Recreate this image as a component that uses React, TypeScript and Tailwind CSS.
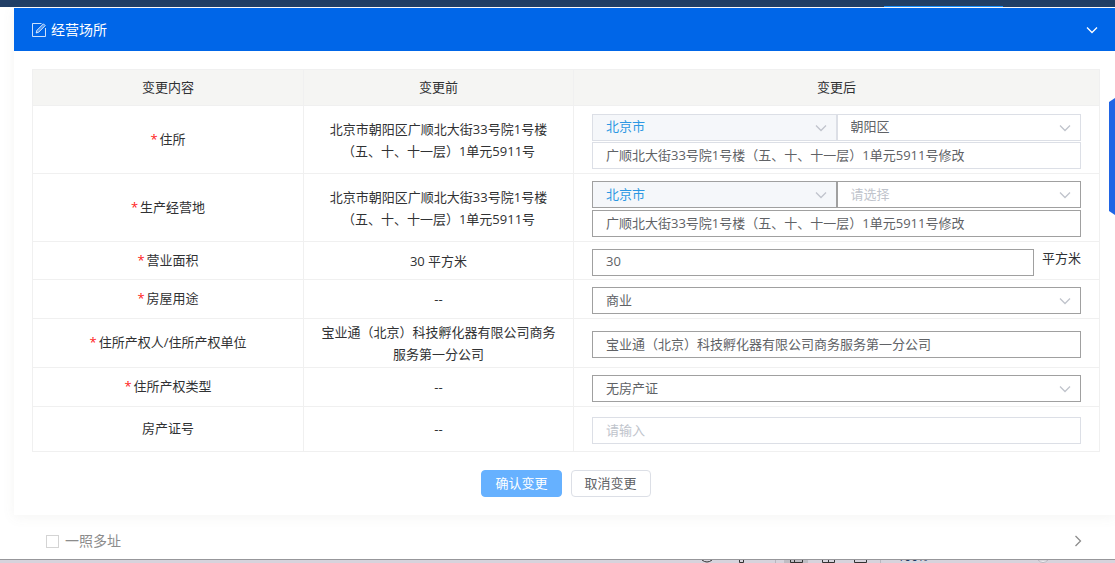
import React, { useState } from 'react';

interface FieldProps {
  label: string;
  muted?: boolean;
}

interface TextFieldProps extends FieldProps {
  value: string;
  placeholder?: string;
}

interface SelectFieldProps extends FieldProps {
  options: string[];
  placeholder?: string;
  active?: boolean;
}

interface RowProps {
  title: string;
  required?: boolean;
  before: string;
  height: string;
  children: React.ReactNode;
}

const fieldClass = 'block w-full h-[27px] border px-[13px] pb-0.5 text-[13px] leading-[20px] outline-none';

const Chevron: React.FC<{ className?: string }> = ({ className }) => (
  <svg viewBox="0 0 12 12" className={`size-3 ${className ?? ''}`} fill="none" stroke="currentColor" strokeWidth="1.3" aria-hidden="true">
    <path d="M1 3.500 6 8.500 11 3.500" />
  </svg>
);

const EditIcon = () => (
  <svg viewBox="0 0 14 14" className="size-3.5" fill="none" stroke="currentColor" strokeOpacity="0.8" aria-hidden="true">
    <path d="M9.500 .5H.5v13h13V5" />
    <path d="M4.200 10 4.900 7.300 11.400 .8 13.200 2.600 6.700 9.200Z" fill="currentColor" fillOpacity="0.3" />
  </svg>
);

const TextField: React.FC<TextFieldProps> = ({ label, value, placeholder, muted }) => {
  const [text, setText] = useState(value);
  return (
    <input
      type="text"
      aria-label={label}
      value={text}
      placeholder={placeholder}
      onChange={(e) => setText(e.target.value)}
      className={`${fieldClass} bg-white text-[#606266] placeholder:text-[#c0c4cc] ${muted ? 'border-[#dcdfe6]' : 'border-[#a0a0a0]'}`}
    />
  );
};

const SelectField: React.FC<SelectFieldProps> = ({ label, options, placeholder, muted, active }) => {
  const [selected, setSelected] = useState(placeholder ? '' : options[0]);
  const color = active ? 'bg-[#f5f7fa] text-[#2c97e3]' : selected ? 'bg-white text-[#606266]' : 'bg-white text-[#c0c4cc]';
  return (
    <div className="relative flex-1">
      <select
        aria-label={label}
        value={selected}
        onChange={(e) => setSelected(e.target.value)}
        className={`${fieldClass} appearance-none ${color} ${muted ? 'border-[#dcdfe6]' : 'border-[#a0a0a0]'}`}
      >
        {placeholder && <option value="">{placeholder}</option>}
        {options.map((option) => (
          <option key={option}>{option}</option>
        ))}
      </select>
      <Chevron className="pointer-events-none absolute right-2.5 top-2 text-[#c0c4cc]" />
    </div>
  );
};

const Row: React.FC<RowProps> = ({ title, required = true, before, height, children }) => (
  <tr className={height}>
    <th scope="row" className="border border-[#f0f0f0] pb-0.5 font-normal">
      {required && <span className="mr-0.5 text-[#ff2020]">*</span>}
      {title}
    </th>
    <td className="border border-[#f0f0f0] px-4 text-center">{before}</td>
    <td className="border border-[#f0f0f0] px-[18px] pt-[3px]">{children}</td>
  </tr>
);

const address = '北京市朝阳区广顺北大街33号院1号楼（五、十、十一层）1单元5911号';
const addressDetail = '广顺北大街33号院1号楼（五、十、十一层）1单元5911号修改';
const company = '宝业通（北京）科技孵化器有限公司商务服务第一分公司';

export default function App() {
  const [multiSite, setMultiSite] = useState(false);

  return (
    <div className="relative flex min-h-screen flex-col overflow-hidden bg-white font-['Open_Sans','Noto_Sans_CJK_SC',sans-serif] text-[13px] leading-[22px] text-[#303133]">
      <div className="flex h-[7px] items-end justify-end bg-[#213f66] pr-28">
        <div className="h-px w-[119px] bg-[#1890ff]" />
      </div>

      <main className="mt-px flex-1">
        <section className="ml-3.5 pb-[18px] shadow-[0_2px_12px_rgba(120,120,100,0.08)]">
          <header className="flex h-[43px] items-center bg-[#0066e8] pl-[18px] pr-[17px] text-white">
            <EditIcon />
            <h2 className="ml-[5px] flex-1 text-sm font-normal">经营场所</h2>
            <button type="button" aria-label="收起">
              <Chevron className="block" />
            </button>
          </header>

          <div className="pl-[18px] pr-[15px] pt-[18px]">
            <table className="w-full table-fixed border-collapse">
              <thead>
                <tr className="h-9 bg-[#f5f5f3]">
                  <th className="w-[271px] border border-[#f0f0f0] pb-0.5 font-normal">变更内容</th>
                  <th className="w-[270px] border border-[#f0f0f0] pb-0.5 font-normal">变更前</th>
                  <th className="border border-[#f0f0f0] pb-0.5 font-normal">变更后</th>
                </tr>
              </thead>
              <tbody>
                <Row title="住所" before={address} height="h-[68px]">
                  <div className="mb-px flex">
                    <SelectField label="住所城市" options={['北京市']} muted active />
                    <SelectField label="住所区县" options={['朝阳区']} muted />
                  </div>
                  <TextField label="住所详细地址" value={addressDetail} muted />
                </Row>
                <Row title="生产经营地" before={address} height="h-[68px]">
                  <div className="mb-0.5 flex">
                    <SelectField label="生产经营地城市" options={['北京市']} active />
                    <SelectField label="生产经营地区县" options={['朝阳区']} placeholder="请选择" />
                  </div>
                  <TextField label="生产经营地详细地址" value={addressDetail} />
                </Row>
                <Row title="营业面积" before="30 平方米" height="h-[38px]">
                  <div className="flex items-start gap-2">
                    <TextField label="营业面积" value="30" />
                    <span className="shrink-0 leading-[18px]">平方米</span>
                  </div>
                </Row>
                <Row title="房屋用途" before="--" height="h-[39px]">
                  <SelectField label="房屋用途" options={['商业']} />
                </Row>
                <Row title="住所产权人/住所产权单位" before={company} height="h-[49px]">
                  <TextField label="住所产权人/住所产权单位" value={company} />
                </Row>
                <Row title="住所产权类型" before="--" height="h-[39px]">
                  <SelectField label="住所产权类型" options={['无房产证']} />
                </Row>
                <Row title="房产证号" required={false} before="--" height="h-[45px]">
                  <TextField label="房产证号" value="" placeholder="请输入" muted />
                </Row>
              </tbody>
            </table>
          </div>

          <div className="mt-[18px] flex justify-center gap-[9px] pr-[15px] pl-[18px]">
            <button type="button" className="h-[27px] rounded border border-[#66b1ff] bg-[#66b1ff] px-[13px] pb-0.5 leading-[20px] text-white">
              确认变更
            </button>
            <button type="button" className="h-[27px] rounded border border-[#dcdfe6] bg-white px-[13px] pb-0.5 leading-[20px] text-[#606266]">
              取消变更
            </button>
          </div>
        </section>

        <section className="flex items-center pt-4 pr-[31px] pl-[46px] pb-1.5 text-sm text-[#8c8c8c]">
          <label className="flex flex-1 items-center gap-1.5">
            <input
              type="checkbox"
              checked={multiSite}
              onChange={(e) => setMultiSite(e.target.checked)}
              className="size-[13px] appearance-none border border-[#d4d4d4] bg-white checked:bg-[#66b1ff]"
            />
            一照多址
          </label>
          <button type="button" aria-label="展开">
            <Chevron className="block -rotate-90" />
          </button>
        </section>
      </main>

      <footer className="relative flex h-1 items-end justify-end overflow-hidden border-t border-[#97979b] bg-[#d7d3dc]">
        <svg viewBox="0 0 415 3" className="h-[3px] w-[415px] shrink-0" fill="none" stroke="#333" aria-hidden="true">
          <path d="M84 0h24v3H84z" fill="#bfbdc3" stroke="none" />
          <path d="M2 0Q7 4 12 0M39.500 0v2.500h4V0M90.500 0v2.500h12V0M94.500 0v2.500M122.500 0v2.500h12V0M128.500 0v2.500M154.500 0v2.500h12V0" />
          <path d="M75.500 0v3M180.500 0v3" stroke="#b9b6be" />
          <path d="M338 0Q343 5 348 0Z" fill="#f3f3f5" stroke="#b9b6be" />
        </svg>
        <span className="absolute right-[187px] bottom-0 text-xs leading-[12px] text-[#1f3864]">100%</span>
      </footer>

      <div className="absolute right-0 top-[98px] h-[117px] w-1.5 bg-[#2065e5] [clip-path:polygon(0_4px,100%_0,100%_100%,0_113px)]" />
    </div>
  );
}
